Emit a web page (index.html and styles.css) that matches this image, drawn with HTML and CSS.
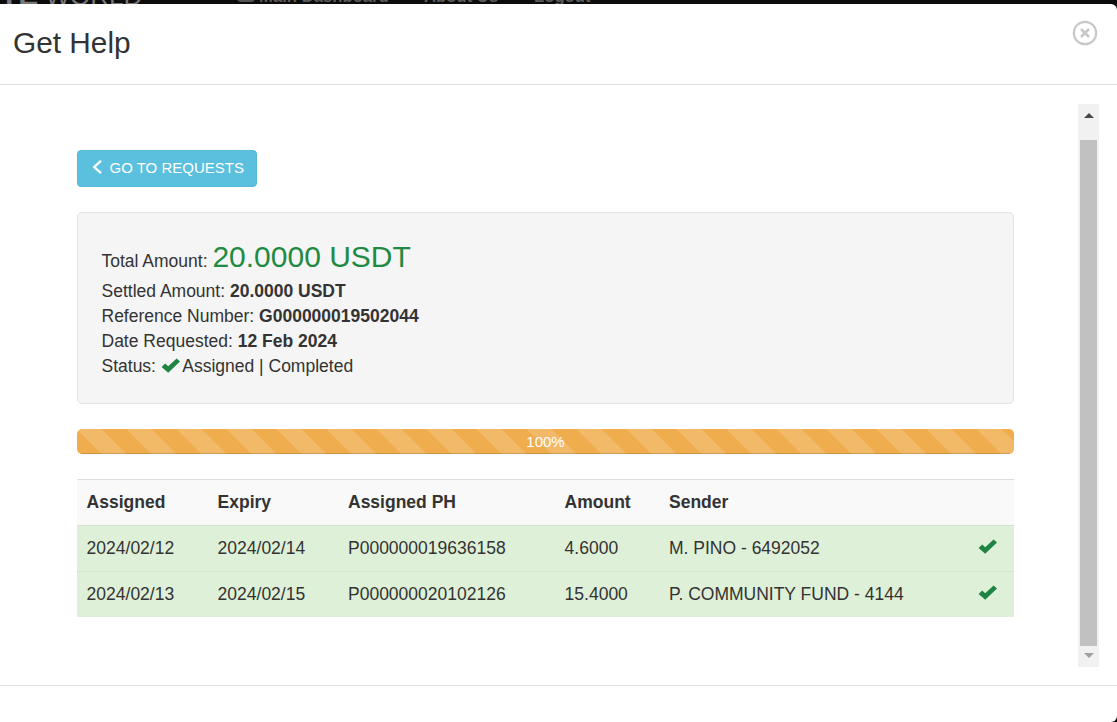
FILE: index.html
```
<!DOCTYPE html>
<html lang="en">
<head>
    <meta charset="UTF-8">
    <title>Get Help</title>
    <link rel="stylesheet" href="styles.css">
</head>
<body>

<nav class="navbar">
    <span class="brand"><b>TE</b> WORLD</span>
    <span class="nav-icon"></span>
    <span class="nav-link nav-main">Main Dashboard</span>
    <span class="nav-link nav-about">About Us</span>
    <span class="nav-link">Logout</span>
</nav>

<div class="modal">
    <div class="modal-header">
        <h4 class="modal-title">Get Help</h4>
        <button type="button" class="close" aria-label="Close">
            <svg width="26" height="26" viewBox="0 0 26 26" fill="none" stroke="#c8c8c8">
                <circle cx="13" cy="13" r="11.2" stroke-width="2.2"/>
                <path d="M9 9l8 8M17 9l-8 8" stroke-width="2.6"/>
            </svg>
        </button>
    </div>

    <div class="modal-body">
        <div class="content">
            <a class="btn-info">
                <svg width="11" height="16" viewBox="0 0 11 16" fill="none" stroke="#fff" stroke-width="2.3">
                    <path d="M9 .8L2.2 7 9 13.2"/>
                </svg>
                <span>GO TO REQUESTS</span>
            </a>

            <div class="well">
                <div class="total">Total Amount: <span class="amount">20.0000 USDT</span></div>
                <div>Settled Amount: <b>20.0000 USDT</b></div>
                <div>Reference Number: <b>G000000019502044</b></div>
                <div>Date Requested: <b>12 Feb 2024</b></div>
                <div>Status: <svg class="check" width="20" height="16" viewBox="0 0 20 16"><path d="M.6 10l3.6-3.6 3 2.8L15.6 1.4 19 4.6 7.2 15.8z"/></svg> Assigned | Completed</div>
            </div>

            <div class="progress">
                <div class="progress-bar">100%</div>
            </div>

            <table class="table">
                <colgroup>
                    <col class="col-assigned">
                    <col class="col-expiry">
                    <col class="col-ph">
                    <col class="col-amount">
                    <col>
                    <col class="col-status">
                </colgroup>
                <thead>
                    <tr>
                        <th>Assigned</th>
                        <th>Expiry</th>
                        <th>Assigned PH</th>
                        <th>Amount</th>
                        <th>Sender</th>
                        <th></th>
                    </tr>
                </thead>
                <tbody>
                    <tr>
                        <td>2024/02/12</td>
                        <td>2024/02/14</td>
                        <td>P000000019636158</td>
                        <td>4.6000</td>
                        <td>M. PINO - 6492052</td>
                        <td><svg class="check" width="20" height="16" viewBox="0 0 20 16"><path d="M.6 10l3.6-3.6 3 2.8L15.6 1.4 19 4.6 7.2 15.8z"/></svg></td>
                    </tr>
                    <tr>
                        <td>2024/02/13</td>
                        <td>2024/02/15</td>
                        <td>P000000020102126</td>
                        <td>15.4000</td>
                        <td>P. COMMUNITY FUND - 4144</td>
                        <td><svg class="check" width="20" height="16" viewBox="0 0 20 16"><path d="M.6 10l3.6-3.6 3 2.8L15.6 1.4 19 4.6 7.2 15.8z"/></svg></td>
                    </tr>
                </tbody>
            </table>
        </div>

        <div class="scrollbar">
            <svg class="arrow-up" width="10" height="5" viewBox="0 0 10 5"><path d="M0 5L5 0l5 5z" fill="#484848"/></svg>
            <div class="thumb"></div>
            <svg class="arrow-down" width="10" height="5" viewBox="0 0 10 5"><path d="M0 0l5 5 5-5z" fill="#a0a0a0"/></svg>
        </div>
    </div>

    <div class="modal-footer"></div>
</div>

</body>
</html>
```
FILE: styles.css
```
* {
    box-sizing: border-box;
}
body {
    margin: 0;
    height: 722px;
    overflow: hidden;
    background-color: #0c0c0c;
    color: #333;
    font-family: "Liberation Sans", Arial, sans-serif;
    font-size: 17.5px;
    line-height: 25px;
}
/* only the lower edge of the navbar shows above the modal */
.navbar {
    display: flex;
    align-items: flex-end;
    height: 4px;
    overflow: hidden;
    color: #5c5c5c;
    white-space: nowrap;
}
.brand {
    width: 237px;
    font-size: 26px;
    line-height: 16px;
    color: #777;
}
.brand b {
    font-size: 30px;
    line-height: 16px;
}
.nav-icon {
    width: 18px;
    height: 10px;
    margin: 0 4px 2px 0;
    border-radius: 4px;
    background-color: #555;
}
.nav-link {
    font-size: 16.7px;
    font-weight: bold;
    line-height: 14px;
}
.nav-main {
    width: 165px;
}
.nav-about {
    width: 110px;
}
.modal {
    height: 718px;
    background-color: #fff;
    border-radius: 0 6px 6px 0;
}
.modal-header {
    display: flex;
    justify-content: space-between;
    height: 81px;
    padding: 16px 19px 0 13px;
    border-bottom: 1px solid #e0e0e0;
}
.modal-title {
    margin: 0;
    font-size: 29.8px;
    font-weight: normal;
    line-height: 45px;
}
.close {
    width: 26px;
    height: 26px;
    padding: 0;
    border: none;
    background: none;
}
.modal-body {
    display: flex;
    justify-content: space-between;
    height: 600px;
    padding: 19px 18px 18px 77px;
}
.content {
    width: 937px;
    padding-top: 46px;
}
.btn-info {
    display: flex;
    align-items: center;
    gap: 7px;
    width: 180px;
    height: 37px;
    margin-bottom: 25px;
    padding: 0 0 2px 13.5px;
    border: 1px solid #56b9d8;
    border-radius: 4px;
    background-color: #5bc0de;
    color: #fff;
    font-size: 15px;
    white-space: nowrap;
}
.well {
    height: 192px;
    margin-bottom: 25px;
    padding: 23px 23.5px;
    border: 1px solid #e3e3e3;
    border-radius: 5px;
    background-color: #f5f5f5;
}
.total {
    height: 43px;
    line-height: 41px;
}
.amount {
    color: #1e8a43;
    font-size: 30px;
}
.check {
    fill: #1e8444;
}
.well .check {
    margin-right: -2.5px;
    vertical-align: -1px;
}
.progress {
    height: 25px;
    margin-bottom: 25px;
    border-radius: 5px;
    overflow: hidden;
}
.progress-bar {
    height: 25px;
    background-color: #f0ad4e;
    background-image: linear-gradient(45deg, rgba(255, 255, 255, .15) 25%, transparent 25%, transparent 50%, rgba(255, 255, 255, .15) 50%, rgba(255, 255, 255, .15) 75%, transparent 75%, transparent);
    background-size: 50px 50px;
    box-shadow: inset 0 -1px 0 rgba(0, 0, 0, .15);
    color: #fff;
    font-size: 15px;
    text-align: center;
}
.table {
    width: 100%;
    table-layout: fixed;
    border-spacing: 0;
}
.col-assigned {
    width: 131px;
}
.col-expiry {
    width: 130px;
}
.col-ph {
    width: 217px;
}
.col-amount {
    width: 104px;
}
.col-status {
    width: 46px;
}
.table th,
.table td {
    height: 46px;
    padding: 0 9.6px;
    border-top: 1px solid #ddd;
    text-align: left;
    white-space: nowrap;
}
.table th {
    background-color: #f9f9f9;
}
.table td {
    background-color: #dff0d8;
    border-top-color: #d3e3cd;
}
.table th:nth-child(3),
.table td:nth-child(3),
.table th:nth-child(5),
.table td:nth-child(5) {
    padding-left: 10px;
}
.table td:last-child {
    padding: 0 15px 0 10px;
}
.scrollbar {
    display: flex;
    flex-direction: column;
    align-items: center;
    width: 21px;
    height: 563px;
    padding: 9px 0;
    background-color: #f1f1f1;
}
.thumb {
    width: 17px;
    height: 506px;
    margin: 22px 0 7px;
    background-color: #c1c1c1;
    flex-shrink: 0;
}
.modal-footer {
    border-top: 1px solid #e0e0e0;
}
```
